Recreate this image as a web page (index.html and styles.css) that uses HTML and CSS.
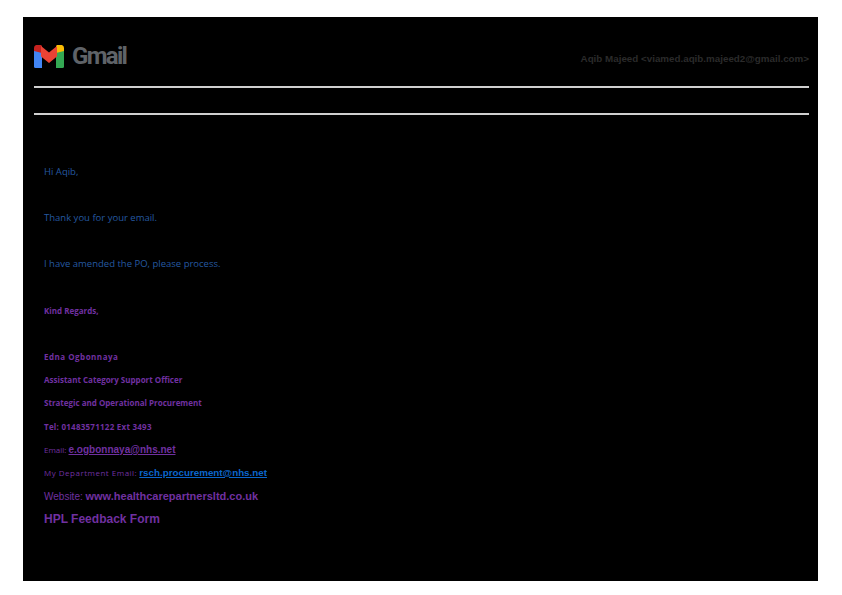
FILE: index.html
```html
<!DOCTYPE html>
<html lang="en">
<head>
<meta charset="utf-8">
<title>Gmail - Re: PO</title>
<link rel="stylesheet" href="styles.css">
</head>
<body>
<main class="page">
  <header class="head">
    <div class="brand">
      <svg class="logo" width="30" height="23" viewBox="0 0 30 23" aria-hidden="true">
        <path fill="#4285f4" d="M0 6h8v17H1.500A1.500 1.500 0 0 1 0 21.500z"/>
        <path fill="#34a853" d="M22 6h8v15.500a1.500 1.500 0 0 1-1.500 1.500H22z"/>
        <path fill="#c5221f" d="M0 3C0 .5 2 0 3.500 0H7l1 1v7L0 6z"/>
        <path fill="#fbbc04" d="M22 1l1-1h3.500C28 0 30 .5 30 3v3l-8 2z"/>
        <path fill="#ea4335" d="M7 1l8 6.500L23 1v10.500L15 18l-8-6.500z"/>
      </svg>
      <span class="wordmark">Gmail</span>
    </div>
    <div class="sender">Aqib Majeed &lt;viamed.aqib.majeed2@gmail.com&gt;</div>
  </header>
  <hr class="rule">
  <div class="subject"></div>
  <hr class="rule">
  <section class="mail">
    <p class="row body-text">Hi Aqib,</p>
    <p class="row"></p>
    <p class="row body-text">Thank you for your email.</p>
    <p class="row"></p>
    <p class="row body-text">I have amended the PO, please process.</p>
    <p class="row"></p>
    <p class="row sig-bold">Kind Regards,</p>
    <p class="row"></p>
    <p class="row sig-bold sig-name">Edna Ogbonnaya</p>
    <p class="row sig-bold">Assistant Category Support Officer</p>
    <p class="row sig-bold">Strategic and Operational Procurement</p>
    <p class="row sig-bold sig-tel">Tel: 01483571122 Ext 3493</p>
    <p class="row sig-small">Email: <a class="link-purple">e.ogbonnaya@nhs.net</a></p>
    <p class="row sig-small"><span class="dept">My Department Email:</span> <a class="link-blue">rsch.procurement@nhs.net</a></p>
    <p class="row sig-web">Website: <a class="web-link">www.healthcarepartnersltd.co.uk</a></p>
    <p class="row sig-form">HPL Feedback Form</p>
  </section>
</main>
</body>
</html>
```
FILE: styles.css
```css
html, body {
  margin: 0;
  background: #fff;
}
body {
  width: 842px;
  height: 595px;
  padding: 17px 24px 14px 23px;
  box-sizing: border-box;
  font-family: "Liberation Sans", Arial, sans-serif;
}
.page {
  height: 564px;
  background: #000;
  padding: 28px 9px 0 11px;
  box-sizing: border-box;
}
.head {
  height: 41px;
  display: flex;
  justify-content: space-between;
  align-items: flex-start;
}
.brand {
  display: flex;
  align-items: center;
  gap: 8px;
}
.logo {
  display: block;
}
.wordmark {
  font-family: Roboto, sans-serif;
  font-size: 24px;
  line-height: 23px;
  font-weight: 700;
  letter-spacing: -1.700px;
  color: #5f6368;
}
.sender {
  margin-top: 8px;
  font-size: 9.800px;
  line-height: 12px;
  font-weight: 700;
  color: #2b2b2b;
}
.rule {
  margin: 0;
  border: 0;
  height: 2px;
  background: #cfcfcf;
}
.subject {
  height: 25px;
}
.mail {
  padding: 44.500px 0 0 10px;
}
.row {
  margin: 0;
  height: 23.200px;
  line-height: 23.200px;
  white-space: nowrap;
}
.body-text {
  font-family: "Open Sans", sans-serif;
  font-size: 9.500px;
  color: #2559a0;
}
.sig-bold {
  font-family: "Open Sans", sans-serif;
  font-size: 8px;
  font-weight: 700;
  color: #7030a0;
}
.sig-name {
  letter-spacing: 0.500px;
}
.sig-tel {
  letter-spacing: 0.250px;
}
.sig-small {
  font-family: "Open Sans", sans-serif;
  font-size: 8px;
  color: #7030a0;
}
.dept {
  letter-spacing: 0.500px;
}
.link-purple {
  font-family: "Liberation Sans", sans-serif;
  font-size: 10px;
  font-weight: 700;
  text-decoration: underline;
  color: #7030a0;
}
.link-blue {
  font-family: "Liberation Sans", sans-serif;
  font-size: 9.800px;
  font-weight: 700;
  text-decoration: underline;
  color: #0b66cc;
}
.sig-web {
  margin-top: 1px;
  font-size: 10px;
  color: #7030a0;
}
.web-link {
  font-size: 11px;
  font-weight: 700;
}
.sig-form {
  font-size: 12px;
  font-weight: 700;
  color: #7030a0;
}
```
